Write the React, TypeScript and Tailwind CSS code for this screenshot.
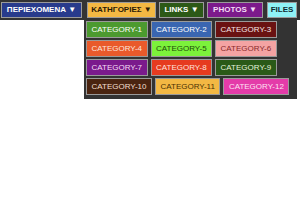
const topItems = [
  { label: "ΠΕΡΙΕΧΟΜΕΝΑ ▼", w: "w-[81px]", cls: "bg-[#283b8c] text-white" },
  { label: "ΚΑΤΗΓΟΡΙΕΣ ▼", w: "w-[69px] ml-[2px]", cls: "bg-[#f3b843] text-[#2a1a05]", open: true },
  { label: "LINKS ▼", w: "w-[45px]", cls: "bg-[#2c5917] text-white" },
  { label: "PHOTOS ▼", w: "w-[56px]", cls: "bg-[#7c1a8b] text-[#f3dcf5]" },
  { label: "FILES", w: "w-[30px] ml-[1px]", cls: "bg-[#8ff2f6] text-[#102a30]" },
];

const categories = [
  { label: "CATEGORY-1", cls: "bg-[#4c9a2f] text-white" },
  { label: "CATEGORY-2", cls: "bg-[#3a66b1] text-white" },
  { label: "CATEGORY-3", cls: "bg-[#6a1212] text-[#f4e6e6]" },
  { label: "CATEGORY-4", cls: "bg-[#e95a2b] text-[#fde5dc]" },
  { label: "CATEGORY-5", cls: "bg-[#7cf23b] text-[#1d4a0a]" },
  { label: "CATEGORY-6", cls: "bg-[#f4a3a3] text-[#8a2a2a]" },
  { label: "CATEGORY-7", cls: "bg-[#7a1a8c] text-[#f3dcf5]" },
  { label: "CATEGORY-8", cls: "bg-[#e63b20] text-[#fde3dc]" },
  { label: "CATEGORY-9", cls: "bg-[#2a5a18] text-[#e3f2dc]" },
  { label: "CATEGORY-10", cls: "bg-[#4a2410] text-[#f1dfcf]" },
  { label: "CATEGORY-11", cls: "bg-[#f3b843] text-[#4a3205]" },
  { label: "CATEGORY-12", cls: "bg-[#e43ba9] text-[#fde2f3]" },
];

function CategoryMenu() {
  return (
    <div className="absolute left-[-3px] top-[16px] z-10 w-[213px] h-[81px] bg-[#333333] pl-[2px] pt-[3px]">
      <div className="flex flex-wrap gap-x-[3px] gap-y-[2px]">
        {categories.map((c) => (
          <div
            key={c.label}
            className={`h-[17px] flex items-center px-[4.5px] border border-[#9a9a9a] text-[8px] leading-none whitespace-nowrap ${c.cls}`}
          >
            {c.label}
          </div>
        ))}
      </div>
    </div>
  );
}

export default function App() {
  return (
    <div className="w-[300px] h-[200px] bg-white font-['Liberation_Sans',Arial,sans-serif]">
      <nav className="h-[20px] bg-[#333333] flex items-start gap-[3px] pl-[1px] pt-[2px]">
        {topItems.map((item) => (
          <div key={item.label} className={`relative ${item.w}`}>
            <div
              className={`h-[16px] flex items-center justify-center border border-[#9a9a9a] text-[8px] font-bold leading-none whitespace-nowrap ${item.cls}`}
            >
              {item.label}
            </div>
            {item.open && <CategoryMenu />}
          </div>
        ))}
      </nav>
    </div>
  );
}
